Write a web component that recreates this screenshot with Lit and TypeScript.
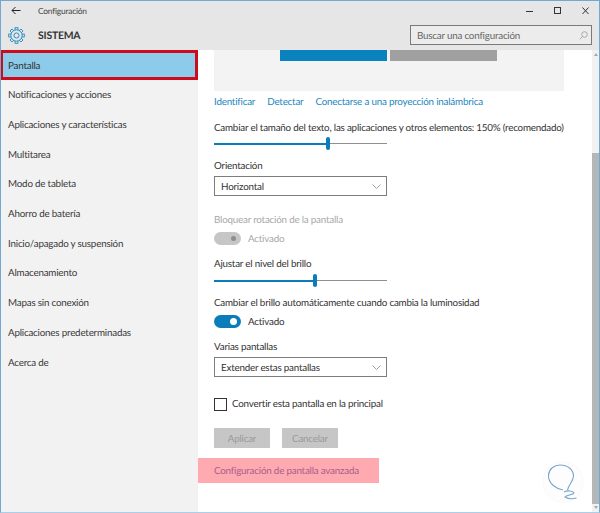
import { LitElement, html, css, svg } from "lit";
import { customElement } from "lit/decorators.js";

const navItems = ["Pantalla","Notificaciones y acciones","Aplicaciones y características","Multitarea","Modo de tableta","Ahorro de batería","Inicio/apagado y suspensión","Almacenamiento","Mapas sin conexión","Aplicaciones predeterminadas","Acerca de"];

const chevron = html`<svg width="9" height="5" viewBox="0 0 9 5"><path d="M.5.5l4 4 4-4" fill="none" stroke="#a0a0a0"/></svg>`;
const gearTeeth = [0,45,90,135,180,225,270,315].map(a => svg`<rect x="10" y="1" width="4" height="4" transform="rotate(${a} 12 12)" fill="none" stroke="#1b87c0" stroke-width="1.2"/>`);

@customElement("app-root")
export class AppRoot extends LitElement {
  static styles = css`
    :host { display:block; width:600px; height:513px; overflow:hidden; box-sizing:border-box; border:1px solid #70a9d2; border-bottom-color:#a8d0ea; background:#fff; font:9.8px/14px "Lato","Open Sans",sans-serif; letter-spacing:-.2px; text-rendering:geometricPrecision; color:#333; }
    .frame { display:flex; flex-direction:column; height:100%; }
    .top { background:#e6e6e6; height:49px; flex:none; display:flex; flex-direction:column; }
    .title { height:19px; display:flex; align-items:center; font-size:8.4px; color:#444; }
    .back { width:30px; display:flex; justify-content:center; box-sizing:border-box; margin-right:7px; }
    .winbtns { margin-left:auto; display:flex; gap:21px; align-items:center; padding-right:10px; }
    .head { flex:1; display:flex; align-items:center; }
    .gear { width:30px; margin-right:7px; display:flex; justify-content:center; }
    .sistema { font-size:10.4px; font-weight:700; color:#333; padding-top:1px; }
    .search { margin-left:auto; margin-right:7px; width:171px; height:18px; border:1px solid #7a7a7a; background:#ececec; display:flex; align-items:center; justify-content:space-between; padding:0 3px 0 6px; color:#666; }
    .body { flex:1; display:flex; min-height:0; }
    nav { width:197px; flex:none; background:#f2f2f2; }
    .item { height:29.7px; display:flex; align-items:center; padding:1px 0 0 7px; color:#3a3a3a; box-sizing:border-box; }
    .item.active { height:30px; width:198px; margin-left:-1px; background:#8ccbe9; color:#333; border:3px solid #cf0a1a; padding:2px 0 0 5px; }
    main { flex:1; min-width:0; padding-left:16px; position:relative; overflow:hidden; }
    .preview { width:350px; height:41px; background:#f3f3f3; display:flex; padding-left:66px; box-sizing:border-box; gap:3px; }
    .m1 { width:107px; height:11px; background:#0a82bd; }
    .m2 { width:107px; height:11px; background:#a0a0a0; }
    .links { display:flex; gap:12px; margin-top:3px; height:14px; line-height:16px; color:#1b87c0; }
    .label { color:#333; height:14px; line-height:16px; white-space:nowrap; }
    .label.dim, .dim { color:#a8a8a8; }
    .slider { width:173px; height:10px; position:relative; }
    .slider .rail { position:absolute; left:0; right:0; top:4px; height:1px; background:#8f8f8f; }
    .slider .fill { position:absolute; left:0; top:4px; height:1.5px; background:#0a7cba; }
    .slider .thumb { position:absolute; top:-2px; width:4px; height:13px; border-radius:2px; background:#0a7cba; }
    .select { width:173px; height:20px; box-sizing:border-box; border:1px solid #7d7d7d; display:flex; align-items:center; justify-content:space-between; padding:0 5px 0 6px; margin-top:4px; color:#333; }
    .select span, .toggle span, .search span { padding-top:2px; }
    .toggle { display:flex; align-items:center; gap:7px; height:14px; margin-top:5px; }
    .sw { width:27px; height:13px; border-radius:7px; background:#0a7cba; position:relative; flex:none; }
    .sw::after { content:""; position:absolute; right:4px; top:3px; width:7px; height:7px; border-radius:50%; background:#fff; }
    .sw.off { background:#c6c6c6; }
    .sw.off::after { background:#8e8e8e; right:5px; top:4px; width:5px; height:5px; }
    .check { display:flex; align-items:center; gap:5px; height:14px; }
    .box { width:11px; height:11px; border:1px solid #333; flex:none; }
    .btns { display:flex; gap:12px; margin-top:17px; }
    .btn { width:56px; height:20px; background:#c6c6c6; color:#9a9a9a; display:flex; align-items:center; justify-content:center; box-sizing:border-box; padding-top:2px; }
    .hl { position:absolute; left:0; top:408px; width:181px; height:25px; background:#ffa9b0; color:#a85f8c; display:flex; align-items:center; padding:0 0 0 16px; box-sizing:border-box; white-space:nowrap; }
    .logo { position:absolute; left:345px; top:412px; width:40px; height:40px; border-radius:50%; background:#fdfdfd; box-shadow:0 0 2px #f0f0f0; }
    .bar { width:7px; flex:none; background:#f1f1f1; position:relative; }
    .thumbv { position:absolute; left:0; right:0; top:103px; bottom:8px; background:#b3b7ba; }
    .arr { position:absolute; left:2px; width:0; height:0; border-left:2px solid transparent; border-right:2px solid transparent; }
    .up { top:3px; border-bottom:3px solid #a8a8a8; }
    .dn { bottom:3px; border-top:3px solid #a8a8a8; }
    .mt5 { margin-top:5px; } .mt6 { margin-top:6px; } .mt9 { margin-top:9px; } .mt11 { margin-top:11px; } .mt12 { margin-top:12px; } .mt16 { margin-top:16px; } .mt20 { margin-top:20px; }
  `;

  render() {
    return html`<div class="frame">
      <div class="top">
        <div class="title">
          <div class="back"><svg width="10" height="9" viewBox="0 0 10 9"><path d="M9.500 4.500H1M4.500 1L1 4.500 4.500 8" fill="none" stroke="#222"/></svg></div>
          <span>Configuración</span>
          <div class="winbtns">
            <svg width="7" height="8" viewBox="0 0 7 8"><path d="M0 4.500h7" stroke="#333"/></svg>
            <svg width="7" height="8" viewBox="0 0 7 8"><rect x=".5" y=".5" width="6" height="6" fill="none" stroke="#333"/></svg>
            <svg width="7" height="8" viewBox="0 0 7 8"><path d="M.5.5l6 6.500M6.500.5l-6 6.500" stroke="#333"/></svg>
          </div>
        </div>
        <div class="head">
          <div class="gear"><svg width="17" height="17" viewBox="0 0 24 24">${gearTeeth}<circle cx="12" cy="12" r="8" fill="#e6e6e6" stroke="#1b87c0" stroke-width="1.3"/><circle cx="12" cy="12" r="3.600" fill="none" stroke="#1b87c0" stroke-width="1.3"/></svg></div>
          <span class="sistema">SISTEMA</span>
          <div class="search"><span>Buscar una configuración</span><svg width="9" height="9" viewBox="0 0 9 9"><circle cx="5.500" cy="3.500" r="2.800" fill="none" stroke="#aaa"/><path d="M3.500 5.500L.8 8.200" stroke="#aaa"/></svg></div>
        </div>
      </div>
      <div class="body">
        <nav>${navItems.map((n,i)=>html`<div class="item ${i===0?"active":""}">${n}</div>`)}</nav>
        <main>
          <div class="preview"><div class="m1"></div><div class="m2"></div></div>
          <div class="links"><span>Identificar</span><span>Detectar</span><span>Conectarse a una proyección inalámbrica</span></div>
          <div class="label mt12">Cambiar el tamaño del texto, las aplicaciones y otros elementos: 150% (recomendado)</div>
          <div class="slider mt5"><div class="rail"></div><div class="fill" style="width:113px"></div><div class="thumb" style="left:112px"></div></div>
          <div class="label mt9">Orientación</div>
          <div class="select"><span>Horizontal</span>${chevron}</div>
          <div class="label dim mt16">Bloquear rotación de la pantalla</div>
          <div class="toggle dim"><div class="sw off"></div><span>Activado</span></div>
          <div class="label mt11">Ajustar el nivel del brillo</div>
          <div class="slider mt6"><div class="rail"></div><div class="fill" style="width:100px"></div><div class="thumb" style="left:99px"></div></div>
          <div class="label mt9">Cambiar el brillo automáticamente cuando cambia la luminosidad</div>
          <div class="toggle"><div class="sw"></div><span>Activado</span></div>
          <div class="label mt11">Varias pantallas</div>
          <div class="select"><span>Extender estas pantallas</span>${chevron}</div>
          <div class="check mt20"><div class="box"></div><span>Convertir esta pantalla en la principal</span></div>
          <div class="btns"><div class="btn">Aplicar</div><div class="btn">Cancelar</div></div>
          <div class="hl">Configuración de pantalla avanzada</div>
          <div class="logo"><svg width="40" height="40" viewBox="0 0 40 40"><path d="M20 28C14 27 5 22 5.500 13 6 7 11 3 17 3c8 0 13.500 5 13.500 11-.5 6-4.500 8-6 14M21 30c4-2 9-1 10 1-1 2-8 2-9 4 3 2 8 2 11.500 1" fill="none" stroke="#7aa6cc" stroke-width="1.1"/></svg></div>
        </main>
        <div class="bar"><div class="arr up"></div><div class="thumbv"></div><div class="arr dn"></div></div>
      </div>
    </div>`;
  }
}
